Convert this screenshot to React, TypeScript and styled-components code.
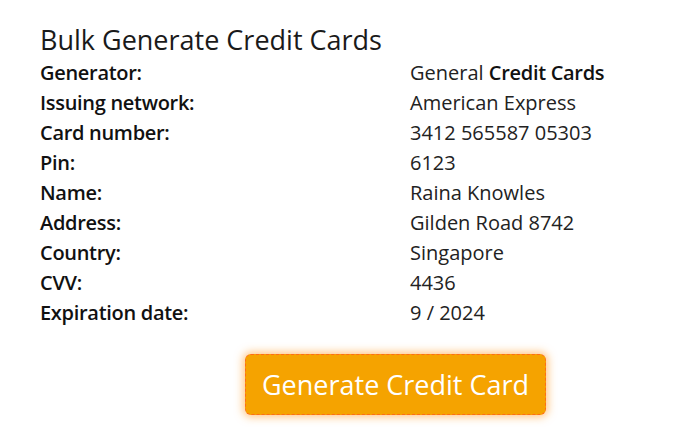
import React from "react";
import styled, { createGlobalStyle } from "styled-components";

const Global = createGlobalStyle`
  html, body { margin: 0; padding: 0; background: #ffffff; }
  body { font-family: "Open Sans", "Noto Sans", sans-serif; }
`;

const Page = styled.div`
  width: 700px;
  height: 441px;
  box-sizing: border-box;
  padding: 23px 0 0 40px;
  overflow: hidden;
`;

const Title = styled.h2`
  margin: 0;
  font-size: 27px;
  font-weight: 400;
  line-height: 34px;
  color: #1a1a1a;
`;

const Table = styled.div`
  display: grid;
  grid-template-columns: 370px auto;
  margin-top: 1px;
`;

const Label = styled.div`
  font-size: 20px;
  font-weight: 600;
  line-height: 30px;
  color: #111;
  letter-spacing: -0.3px;
`;

const Value = styled.div`
  font-size: 20px;
  font-weight: 400;
  line-height: 30px;
  color: #222;
`;

const Strong = styled.b`
  font-weight: 600;
  color: #111;
  letter-spacing: -0.3px;
`;

const ButtonRow = styled.div`
  display: flex;
  padding-left: 205px;
  margin-top: 26px;
`;

const GenButton = styled.button`
  width: 301px;
  height: 61px;
  background: #f5a300;
  border: 1px dashed #ff6a1a;
  border-radius: 6px;
  box-shadow: 0 0 8px 2px rgba(255, 150, 30, 0.55);
  color: #ffffff;
  font-family: "Open Sans", "Noto Sans", sans-serif;
  font-size: 27px;
  font-weight: 400;
  cursor: pointer;
  padding: 0;
`;

const rows: [string, React.ReactNode][] = [
  ["Generator:", <>General <Strong>Credit Cards</Strong></>],
  ["Issuing network:", "American Express"],
  ["Card number:", "3412 565587 05303"],
  ["Pin:", "6123"],
  ["Name:", "Raina Knowles"],
  ["Address:", "Gilden Road 8742"],
  ["Country:", "Singapore"],
  ["CVV:", "4436"],
  ["Expiration date:", "9 / 2024"],
];

export default function App() {
  return (
    <>
      <Global />
      <Page>
        <Title>Bulk Generate Credit Cards</Title>
        <Table>
          {rows.map(([l, v]) => (
            <React.Fragment key={l}>
              <Label>{l}</Label>
              <Value>{v}</Value>
            </React.Fragment>
          ))}
        </Table>
        <ButtonRow>
          <GenButton>Generate Credit Card</GenButton>
        </ButtonRow>
      </Page>
    </>
  );
}
